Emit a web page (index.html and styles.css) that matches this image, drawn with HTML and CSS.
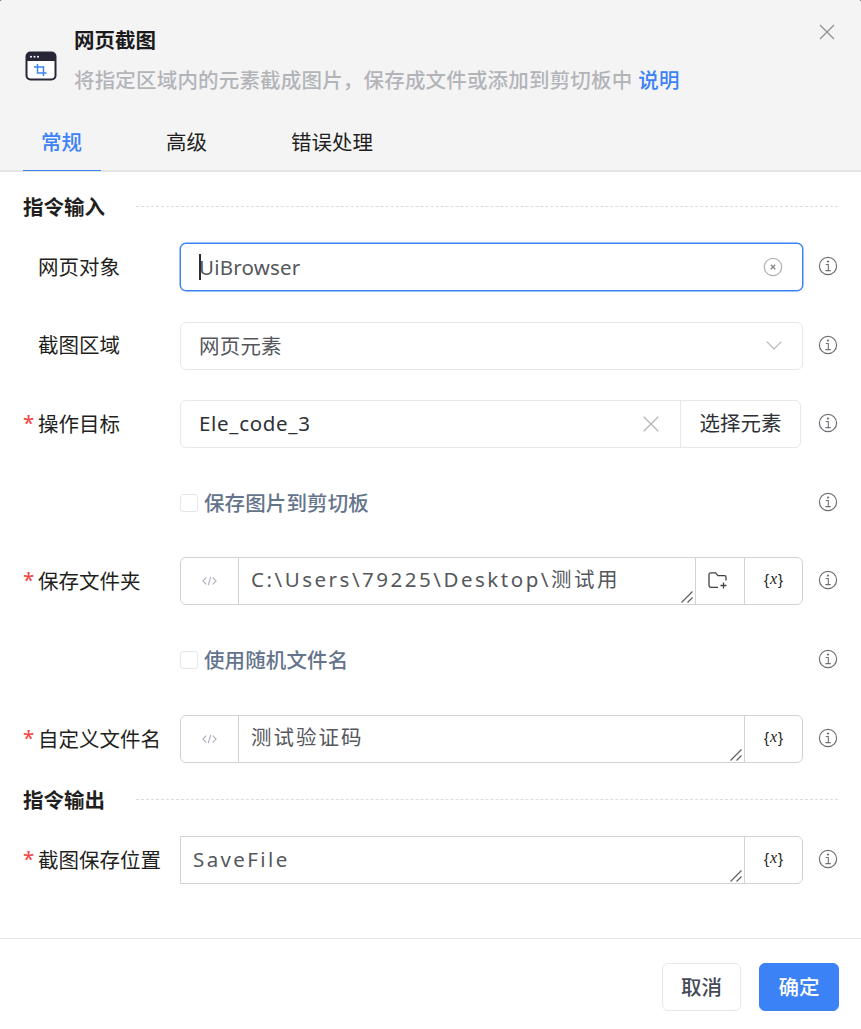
FILE: index.html
```html
<!DOCTYPE html>
<html lang="zh">
<head>
<meta charset="utf-8">
<title>网页截图</title>
<link rel="stylesheet" href="styles.css">
</head>
<body>
<div class="dialog">
  <header class="head">
    <div class="head-top">
      <svg class="app-icon" viewBox="0 0 32 30" width="32" height="30">
        <rect x="1.500" y="1.500" width="29" height="27" rx="4" fill="#fff" stroke="#272636" stroke-width="2"/>
        <path d="M1.500 5.500a4 4 0 0 1 4-4h21a4 4 0 0 1 4 4v4.500H1.500z" fill="#272636"/>
        <circle cx="6" cy="5.700" r="1" fill="#fff"/><circle cx="9.500" cy="5.700" r="1" fill="#fff"/><circle cx="13" cy="5.700" r="1" fill="#fff"/>
        <path d="M12.500 13v9h9M9 16h9.500v9" fill="none" stroke="#3b82f6" stroke-width="1.500"/>
      </svg>
      <div class="head-text">
        <div class="title">网页截图</div>
        <div class="desc">将指定区域内的元素截成图片，保存成文件或添加到剪切板中<a class="help">说明</a></div>
      </div>
      <svg class="close" viewBox="0 0 16 16" width="16" height="16"><path d="M1 1l14 14M15 1L1 15" stroke="#8f9095" stroke-width="1.300" fill="none"/></svg>
    </div>
    <nav class="tabs">
      <div class="tab active">常规</div>
      <div class="tab">高级</div>
      <div class="tab">错误处理</div>
    </nav>
  </header>

  <main class="body">
    <div class="section"><span>指令输入</span><i></i></div>

    <div class="row">
      <label class="lbl">网页对象</label>
      <div class="box focus"><span class="caret"></span><span class="val">UiBrowser</span>
        <svg class="ic-clear" viewBox="0 0 20 20" width="20" height="20"><circle cx="10" cy="10" r="8.700" fill="none" stroke="#b4b5b9" stroke-width="1.300"/><path d="M7.800 7.800l4.400 4.400M12.200 7.800l-4.400 4.400" stroke="#85868b" stroke-width="1.300"/></svg>
      </div>
      <svg class="info"><use href="#i-info"/></svg>
    </div>

    <div class="row">
      <label class="lbl">截图区域</label>
      <div class="box light"><span class="val up">网页元素</span>
        <svg class="ic-chev" viewBox="0 0 16 9" width="16" height="9"><path d="M.7.700L8 8l7.300-7.300" fill="none" stroke="#b4b5b9" stroke-width="1.200"/></svg>
      </div>
      <svg class="info"><use href="#i-info"/></svg>
    </div>

    <div class="row">
      <label class="lbl req">操作目标</label>
      <div class="box light short"><span class="val dark up">Ele_code_3</span>
        <svg class="ic-x" viewBox="0 0 16 16" width="16" height="16"><path d="M.7.700l14.600 14.600M15.300.700L.7 15.300" stroke="#b4b5b9" stroke-width="1.300"/></svg>
        <span class="pick">选择元素</span>
      </div>
      <svg class="info"><use href="#i-info"/></svg>
    </div>

    <div class="row">
      <span class="lbl"></span>
      <div class="check"><span class="cb"></span><span class="up">保存图片到剪切板</span></div>
      <svg class="info"><use href="#i-info"/></svg>
    </div>

    <div class="row">
      <label class="lbl req">保存文件夹</label>
      <div class="box strong">
        <span class="cell code"><svg class="ic-code"><use href="#i-code"/></svg></span>
        <div class="ta path">C:\Users\79225\Desktop\测试用<svg class="grip"><use href="#i-grip"/></svg></div>
        <span class="cell folder"><svg viewBox="0 0 20 17" width="20" height="17"><path d="M10 15.300H3a2 2 0 0 1-2-2V2.400a1.500 1.500 0 0 1 1.500-1.500h5l2.500 2.800h6.500a1.500 1.500 0 0 1 1.500 1.500v3.300" fill="none" stroke="#3f4146" stroke-width="1.300"/><path d="M12.500 13.500h6M15.500 10.500v6" stroke="#3f4146" stroke-width="1.300" fill="none"/></svg></span>
        <span class="cell var">{<em>x</em>}</span>
      </div>
      <svg class="info"><use href="#i-info"/></svg>
    </div>

    <div class="row wide">
      <span class="lbl"></span>
      <div class="check"><span class="cb"></span><span class="up">使用随机文件名</span></div>
      <svg class="info"><use href="#i-info"/></svg>
    </div>

    <div class="row last">
      <label class="lbl req">自定义文件名</label>
      <div class="box strong">
        <span class="cell code"><svg class="ic-code"><use href="#i-code"/></svg></span>
        <div class="ta">测试验证码<svg class="grip"><use href="#i-grip"/></svg></div>
        <span class="cell var">{<em>x</em>}</span>
      </div>
      <svg class="info"><use href="#i-info"/></svg>
    </div>

    <div class="section second"><span>指令输出</span><i></i></div>

    <div class="row last">
      <label class="lbl req">截图保存位置</label>
      <div class="box strong square">
        <div class="ta plain">SaveFile<svg class="grip"><use href="#i-grip"/></svg></div>
        <span class="cell var">{<em>x</em>}</span>
      </div>
      <svg class="info"><use href="#i-info"/></svg>
    </div>
  </main>

  <footer class="foot">
    <button class="btn">取消</button>
    <button class="btn primary">确定</button>
  </footer>
</div>

<svg class="defs" width="0" height="0">
  <symbol id="i-info" viewBox="0 0 20 20">
    <circle cx="10" cy="10" r="8.600" fill="none" stroke="#6f7075" stroke-width="1.200"/>
    <path d="M7.800 8.500h2.500v6M7.400 14.600h5.400" fill="none" stroke="#6f7075" stroke-width="1.100"/>
    <circle cx="10" cy="5.600" r="1.100" fill="#6f7075"/>
  </symbol>
  <symbol id="i-code" viewBox="0 0 16 10">
    <path d="M4.500 1.500L1 5l3.500 3.500M11.500 1.500L15 5l-3.500 3.500M9.300.5L6.700 9.500" fill="none" stroke="#a3a8b5" stroke-width="1.100"/>
  </symbol>
  <symbol id="i-grip" viewBox="0 0 12 12">
    <path d="M.5 11.500L11.500 .5M6.500 11.500L11.500 6.500" fill="none" stroke="#55575c" stroke-width="1.100"/>
  </symbol>
</svg>
</body>
</html>
```
FILE: styles.css
```css
* { box-sizing: border-box; }
html, body { margin: 0; height: 100%; background: #6b6b6b; }
body {
  font-family: "Noto Sans", "Noto Sans CJK SC", sans-serif;
  font-size: 20.5px;
  color: #1f1f21;
}
.defs { position: absolute; }
.dialog { width: 861px; height: 1029px; display: flex; flex-direction: column; background: #fff; overflow: hidden; border-radius: 3px 3px 0 0; }

.head { height: 172px; background: #f4f4f5; border-bottom: 2px solid #e4e4e5; flex: none; display: flex; flex-direction: column; }
.head-top { display: flex; height: 126px; position: relative; padding: 20px 0 0 25px; }
.app-icon { margin-top: 31px; flex: none; }
.head-text { margin-left: 17px; }
.title { font-weight: 700; line-height: 40px; font-size: 20.5px; color: #1b1b1d; }
.desc { color: #b3b4b9; font-weight: 500; line-height: 40px; white-space: nowrap; letter-spacing: .18px; }
.help { color: #3b82f6; margin-left: 6px; }
.close { position: absolute; left: 819px; top: 24px; }

.tabs { display: flex; gap: 47px; padding-left: 23px; flex: 1; }
.tab { padding: 0 19px 0 18px; height: 44px; line-height: 32px; margin-bottom: -2px; }
.tab.active { color: #3b82f6; border-bottom: 1px solid #3b82f6; font-weight: 500; height: 45px; margin-top: 0; }

.body { flex: 1; padding: 14px 23px 0; }
.section { display: flex; align-items: center; height: 40px; font-weight: 700; margin-bottom: 17.4px; }
.section i { flex: 1; margin-left: 31px; border-top: 1px dashed #dcdde0; }
.section.second { margin-top: 16px; margin-bottom: 17px; }

.row { display: flex; align-items: center; height: 48px; margin-bottom: 30.5px; position: relative; }
.row.wide { margin-bottom: 31.5px; }
.row.last { margin-bottom: 0; }
.lbl { width: 157px; padding-left: 15px; flex: none; position: relative; line-height: 47px; white-space: nowrap; }
.lbl.req::before { content: "*"; position: absolute; left: 0; top: -2px; color: #f04c4c; font-weight: 500; }

.box { width: 623px; height: 48px; flex: none; display: flex; align-items: center; border: 1px solid #e8e8ea; border-radius: 6px; background: #fff; }
.box.focus { border-color: #3b82f6; box-shadow: 0 0 0 .5px #3b82f6; padding: 0 19px 0 18px; }
.box.light { padding-left: 18px; }
.box.short { width: 621px; padding-right: 0; }
.box.strong { border-color: #d2d2d5; }
.box.square { border-radius: 0 6px 6px 0; }
.val { color: #55575c; flex: 1; letter-spacing: .2px; }
.val.dark { color: #2e3036; letter-spacing: .7px; }
.up { padding-bottom: 2px; }
.caret { width: 1.500px; height: 26px; background: #2b2c30; margin-right: -1.500px; position: relative; }
.ic-clear { flex: none; }
.ic-chev { margin-right: 20px; flex: none; }
.ic-x { margin-right: 21px; flex: none; }
.pick { width: 120px; height: 46px; line-height: 44px; text-align: center; border-left: 1px solid #e8e8ea; color: #2e3036; flex: none; }

.cell { height: 46px; display: flex; align-items: center; justify-content: center; flex: none; }
.code { width: 58px; border-right: 1px solid #d2d2d5; }
.ic-code { width: 15px; height: 10px; }
.folder { width: 49px; border-left: 1px solid #d2d2d5; padding: 0 4px 2px 0; }
.var { width: 58px; border-left: 1px solid #d2d2d5; font-size: 15px; font-family: "Liberation Sans", sans-serif; color: #202124; padding-bottom: 4px; }
.var em { font-family: "Liberation Serif", serif; font-size: 16px; padding: 0 1px; }

.ta { flex: 1; height: 46px; line-height: 43px; padding-left: 12px; color: #55575c; letter-spacing: 2px; overflow: hidden; white-space: nowrap; position: relative; }
.ta.path { letter-spacing: 2.52px; }
.ta.plain { line-height: 44px; letter-spacing: 2.4px; }
.grip { position: absolute; right: 2px; bottom: 1px; width: 12px; height: 12px; }

.check { width: 623px; flex: none; display: flex; align-items: center; color: #64748b; font-weight: 500; letter-spacing: .12px; }
.cb { width: 18px; height: 18px; border: 1px solid #e6e6e8; border-radius: 3px; margin-right: 6px; background: #fff; }

.info { width: 20px; height: 20px; margin-left: 15px; margin-bottom: 2px; flex: none; }
.short ~ .info { margin-left: 17px; }

.foot { height: 91px; flex: none; border-top: 1px solid #e4e4e5; display: flex; justify-content: flex-end; align-items: flex-start; gap: 18px; padding: 24px 22px 0 0; }
.btn { width: 79px; height: 48px; font: inherit; font-weight: 500; color: #444a55; background: #fff; border: 1px solid #e8e8ea; border-radius: 6px; padding: 0 0 2px; }
.btn.primary { width: 80px; background: #3b82f6; border-color: #3b82f6; color: #fff; }
```
